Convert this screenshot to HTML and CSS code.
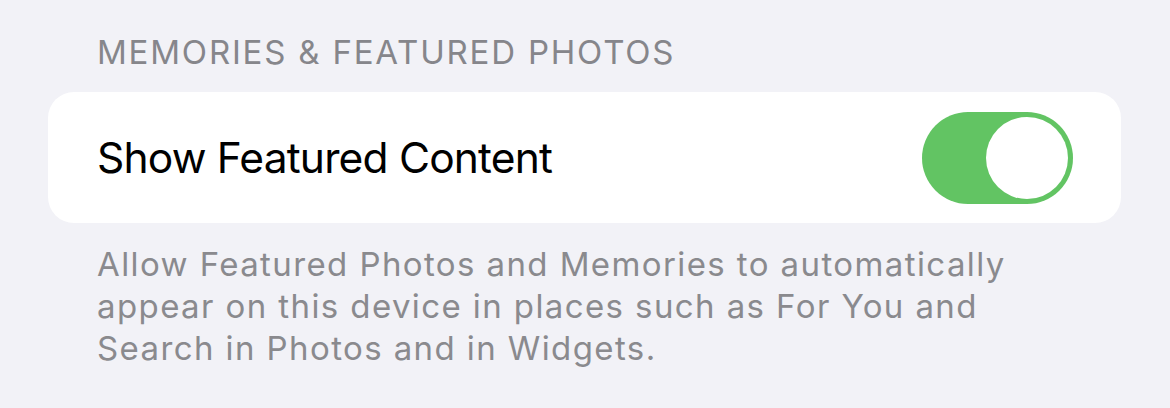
FILE: index.html
```html
<!DOCTYPE html>
<html lang="en">
<head>
<meta charset="utf-8">
<link rel="stylesheet" href="styles.css">
</head>
<body>
  <section class="group">
    <h2 class="group-header">MEMORIES &amp; FEATURED PHOTOS</h2>
    <div class="card">
      <span class="row-label">Show Featured Content</span>
      <span class="toggle" role="switch" aria-checked="true"><span class="knob"></span></span>
    </div>
    <p class="group-footer">Allow Featured Photos and Memories to automatically appear on this device in places such as For You and Search in Photos and in Widgets.</p>
  </section>
</body>
</html>
```
FILE: styles.css
```css
html, body {
  margin: 0;
  padding: 0;
  background: #f2f2f7;
  width: 1170px;
  height: 408px;
  overflow: hidden;
}
body {
  font-family: Inter, "Noto Sans", "Liberation Sans", sans-serif;
  -webkit-font-smoothing: antialiased;
}
.group {
  padding: 30px 49px 0 48px;
}
.group-header {
  margin: 0;
  padding: 0 0 0 49px;
  font-size: 33px;
  font-weight: 400;
  line-height: 44px;
  color: #86868b;
  letter-spacing: 1.8px;
}
.card {
  margin-top: 18px;
  height: 131px;
  background: #ffffff;
  border-radius: 26px;
  display: flex;
  align-items: center;
  justify-content: space-between;
  padding: 0 48px 0 49px;
}
.row-label {
  font-size: 42.5px;
  color: #000;
  letter-spacing: -0.82px;
}
.toggle {
  width: 151px;
  height: 92px;
  border-radius: 46px;
  background: #62c463;
  display: flex;
  align-items: center;
  justify-content: flex-end;
  padding: 0 5px;
  box-sizing: border-box;
}
.knob {
  width: 82px;
  height: 82px;
  border-radius: 50%;
  background: #fff;
}
.group-footer {
  margin: 20px 0 0;
  padding: 0 0 0 49px;
  font-size: 33px;
  line-height: 42px;
  color: #8a8a8e;
  letter-spacing: 1.4px;
  width: 1000px;
}
```
